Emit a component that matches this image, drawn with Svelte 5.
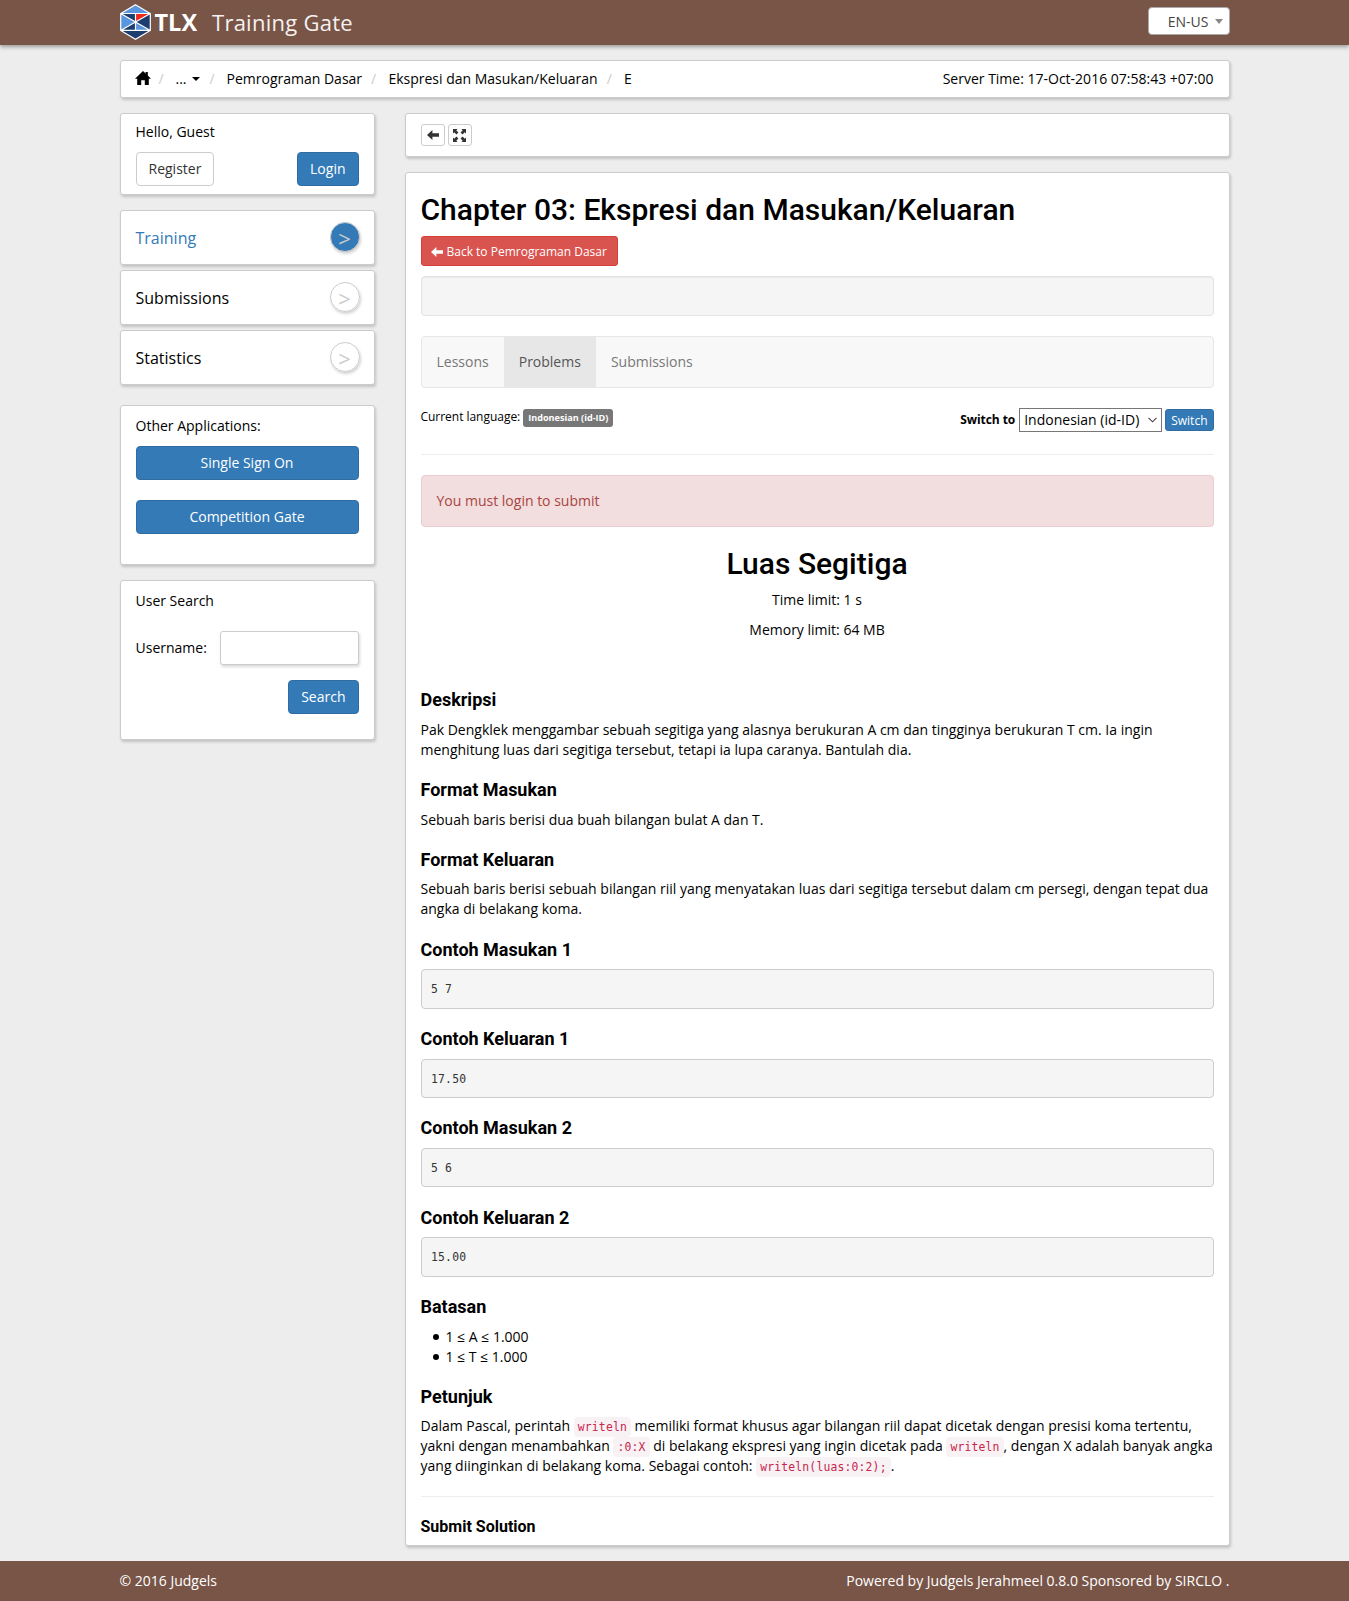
<script>
  const menu = [
    { label: 'Training', active: true },
    { label: 'Submissions', active: false },
    { label: 'Statistics', active: false },
  ];
  const samples = [
    { title: 'Contoh Masukan 1', body: '5 7' },
    { title: 'Contoh Keluaran 1', body: '17.50' },
    { title: 'Contoh Masukan 2', body: '5 6' },
    { title: 'Contoh Keluaran 2', body: '15.00' },
  ];
</script>

{#snippet leftArrow()}
  <svg class="arrow" viewBox="0 0 12 10" width="12" height="10"><path d="M0 5 5.4 0V3.3H12V6.7H5.4V10Z" fill="currentColor" /></svg>
{/snippet}

<header>
  <div class="container bar">
    <div class="brand">
      <svg class="logo" viewBox="0 0 31 36" width="31" height="36">
        <path d="M15.5 .8 30.3 9.5V26.4L15.5 35.2.7 26.4V9.5Z" fill="#5a96df" />
        <path d="M.7 9.5H15.5V18Z" fill="#1c3d6e" />
        <path d="M15.5 9.5H30.3L15.5 18Z" fill="#ee2a1c" />
        <path d="M30.3 9.5V26.4L15.5 18Z" fill="#1c3d6e" />
        <path d="M.7 26.4H30.3L15.5 35.2Z" fill="#1c3d6e" />
        <path d="M15.5 18 .7 26.4H15.5Z" fill="#1c3d6e" />
        <path d="M15.5 .8 30.3 9.5V26.4L15.5 35.2.7 26.4V9.5ZM.7 9.5H30.3M.7 26.4H30.3M.7 9.5 30.3 26.4M30.3 9.5.7 26.4M15.5 9.5V26.4" fill="none" stroke="#fff" stroke-width="1.2" />
      </svg>
      <span class="tlx">TLX</span>
      <span class="app">Training Gate</span>
    </div>
    <div class="lang">EN-US<i></i></div>
  </div>
</header>

<div class="container body">
  <nav class="card crumbs">
    <svg class="home" viewBox="0 0 16 14" width="16" height="14"><path d="M8 0 10.6 2.5V1H12.8V4.6L16 7.8H13.8V14H9.8V9.2H6.2V14H2.2V7.8H0Z" fill="#000" /></svg>
    <span class="slash s1">/</span>
    <span class="dots">...<i></i></span>
    <span class="slash s2">/</span>
    <span>Pemrograman Dasar</span>
    <span class="slash s3">/</span>
    <span>Ekspresi dan Masukan/Keluaran</span>
    <span class="slash s3">/</span>
    <span>E</span>
    <span class="time">Server Time: 17-Oct-2016 07:58:43 +07:00</span>
  </nav>

  <div class="columns">
    <aside>
      <section class="card hello">
        <div>Hello, Guest</div>
        <div class="pair">
          <button class="btn plain">Register</button>
          <button class="btn blue">Login</button>
        </div>
      </section>
      <div class="menu">
        {#each menu as item}
          <a class="card item" class:active={item.active}>
            <span>{item.label}</span><b>&gt;</b>
          </a>
        {/each}
      </div>
      <section class="card apps">
        <div>Other Applications:</div>
        <button class="btn blue">Single Sign On</button>
        <button class="btn blue">Competition Gate</button>
      </section>
      <section class="card search">
        <div>User Search</div>
        <div class="field"><span>Username:</span><input type="text" /></div>
        <button class="btn blue">Search</button>
      </section>
    </aside>

    <main>
      <section class="card tools">
        <button class="tool">{@render leftArrow()}</button>
        <button class="tool">
          <svg viewBox="0 0 13 13" width="13" height="13"><g fill="currentColor"><path d="M0 0H4.6L3.3 1.3 5.4 3.4 3.4 5.4 1.3 3.3 0 4.6Z" /><path d="M13 0V4.6L11.7 3.3 9.6 5.4 7.6 3.4 9.7 1.3 8.4 0Z" /><path d="M0 13V8.4L1.3 9.7 3.4 7.6 5.4 9.6 3.3 11.7 4.6 13Z" /><path d="M13 13H8.4L9.7 11.7 7.6 9.6 9.6 7.6 11.7 9.7 13 8.4Z" /></g></svg>
        </button>
      </section>

      <section class="card content">
        <h2>Chapter 03: Ekspresi dan Masukan/Keluaran</h2>
        <button class="back">{@render leftArrow()}<span>Back to Pemrograman Dasar</span></button>
        <div class="well"></div>
        <div class="tabs"><span>Lessons</span><span class="on">Problems</span><span>Submissions</span></div>
        <div class="langrow">
          <div class="current"><span>Current language:</span><b>Indonesian (id-ID)</b></div>
          <div class="switch">
            <b>Switch to</b>
            <div class="select">Indonesian (id-ID)<svg viewBox="0 0 9 6" width="9" height="6"><path d="M.5 .8 4.5 4.8 8.5 .8" fill="none" stroke="#444" stroke-width="1.1" /></svg></div>
            <button>Switch</button>
          </div>
        </div>
        <hr />
        <div class="alert">You must login to submit</div>

        <div class="problem">
          <h2>Luas Segitiga</h2>
          <p>Time limit: 1 s</p>
          <p>Memory limit: 64 MB</p>
        </div>

        <h3>Deskripsi</h3>
        <p>Pak Dengklek menggambar sebuah segitiga yang alasnya berukuran A cm dan tingginya berukuran T cm. Ia ingin<br />menghitung luas dari segitiga tersebut, tetapi ia lupa caranya. Bantulah dia.</p>
        <h3>Format Masukan</h3>
        <p>Sebuah baris berisi dua buah bilangan bulat A dan T.</p>
        <h3>Format Keluaran</h3>
        <p>Sebuah baris berisi sebuah bilangan riil yang menyatakan luas dari segitiga tersebut dalam cm persegi, dengan tepat dua<br />angka di belakang koma.</p>
        {#each samples as s}
          <h3 class="sample">{s.title}</h3>
          <pre>{s.body}</pre>
        {/each}
        <h3>Batasan</h3>
        <ul>
          <li>1 ≤ A ≤ 1.000</li>
          <li>1 ≤ T ≤ 1.000</li>
        </ul>
        <h3>Petunjuk</h3>
        <p>Dalam Pascal, perintah <code>writeln</code> memiliki format khusus agar bilangan riil dapat dicetak dengan presisi koma tertentu,<br />yakni dengan menambahkan <code>:0:X</code> di belakang ekspresi yang ingin dicetak pada <code>writeln</code>, dengan X adalah banyak angka<br />yang diinginkan di belakang koma. Sebagai contoh: <code>writeln(luas:0:2);</code>.</p>
        <hr class="end" />
        <h4>Submit Solution</h4>
      </section>
    </main>
  </div>
</div>

<footer>
  <div class="container bar"><span>© 2016 Judgels</span><span>Powered by Judgels Jerahmeel 0.8.0 Sponsored by SIRCLO .</span></div>
</footer>

<style>
  :global(body) {
    background: #ededed;
    color: #000;
    font: 14px/20px "Open Sans", sans-serif;
  }
  :global(#app) * { box-sizing: border-box; }
  .container { width: 1110px; margin: 0 auto; }
  .bar { display: flex; justify-content: space-between; }
  button { font: inherit; margin: 0; }

  header { height: 45px; background: #795548; box-shadow: 0 2px 4px rgba(0, 0, 0, 0.35); }
  .brand { display: flex; align-items: center; height: 45px; padding-bottom: 1px; color: #fff; }
  .logo { display: block; }
  .tlx { font-size: 23.5px; font-weight: 700; margin-left: 4px; width: 46px; }
  .app { font-size: 22px; letter-spacing: 0.26px; margin-left: 11.5px; color: #f5f1ef; }
  .lang {
    display: flex; align-items: center; justify-content: flex-end; gap: 6px;
    width: 82px; height: 28px; margin-top: 7px; padding: 1px 6px 0 0;
    background: #fff; border: 1px solid #aaa; border-radius: 4px; color: #444;
  }
  .lang i { border: 4px solid transparent; border-top: 5px solid #888; border-bottom: 0; margin-top: -1px; }

  .card {
    display: block; background: #fff; border: 1px solid #ccc; border-radius: 3px;
    box-shadow: 1px 2px 3px rgba(0, 0, 0, 0.18);
  }
  .body { padding-top: 15px; }
  .crumbs { display: flex; align-items: center; height: 38px; padding: 0 15px 0 14px; margin-bottom: 15px; white-space: nowrap; }
  .home { margin-right: 8px; margin-top: -3px; }
  .slash { color: #ccc; }
  .s1 { width: 17px; }
  .dots { display: flex; align-items: center; width: 34px; gap: 5px; }
  .dots i { border: 4px solid transparent; border-top-color: #000; border-bottom: 0; }
  .s2 { width: 17px; }
  .s3 { width: 17.3px; margin-left: 9px; }
  .time { margin-left: auto; }

  .columns { display: flex; justify-content: space-between; }
  aside { width: 255px; }
  main { width: 825px; }

  .btn { height: 34px; padding: 0 12px; border-radius: 4px; border: 1px solid; white-space: nowrap; }
  .plain { background: #fff; border-color: #ccc; color: #333; }
  .blue { background: #337ab7; border-color: #2e6da4; color: #fff; }

  .hello { height: 82px; padding: 8px 15px; margin-bottom: 15px; }
  .pair { display: flex; justify-content: space-between; margin-top: 10px; }
  .menu { display: grid; gap: 5px; margin-bottom: 20px; }
  .item { display: flex; justify-content: space-between; align-items: center; height: 55px; padding: 0 14px 0 15px; font-size: 16px; }
  .item b {
    width: 30px; height: 30px; border: 1px solid #ccc; border-radius: 50%; margin-top: -1px;
    box-shadow: 1px 2px 3px rgba(0, 0, 0, 0.18);
    text-align: center; font-weight: 400; font-size: 22px; line-height: 30px; color: #ccc;
  }
  .active { color: #337ab7; }
  .active b { background: #337ab7; line-height: 31px; }
  .apps { display: flex; flex-direction: column; height: 160px; padding: 10px 15px; margin-bottom: 15px; }
  .apps .btn { margin-top: 10px; }
  .apps .btn + .btn { margin-top: 20px; }
  .search { display: flex; flex-direction: column; height: 160px; padding: 10px 15px; }
  .field { display: flex; justify-content: space-between; align-items: center; margin: 20px 0 15px; }
  .field input {
    width: 139px; height: 34px; border: 1px solid #ccc; border-radius: 3px; background: #fff;
    box-shadow: 1px 2px 3px rgba(0, 0, 0, 0.15);
  }
  .search .btn { align-self: flex-end; }

  .tools { display: flex; gap: 3px; height: 44px; padding: 10px 15px; margin-bottom: 15px; }
  .tool {
    display: flex; align-items: center; justify-content: center; width: 24px; height: 22px;
    padding: 0; background: #fff; border: 1px solid #ccc; border-radius: 3px; color: #333;
  }

  .content { height: 1374px; padding: 0 15px; margin-bottom: 15px; overflow: hidden; }
  h2, h3, h4 { font-family: Roboto, sans-serif; line-height: 1.1; margin: 20px 0 10px; }
  h2 { font-size: 30px; font-weight: 500; }
  h3 { font-size: 18px; font-weight: 700; }
  .sample { margin: 20.4px 0 9.6px; }
  h4 { font-size: 16px; font-weight: 700; margin: 0; }
  p { margin: 0 0 10px; white-space: nowrap; }
  .back {
    display: flex; align-items: center; gap: 4px; height: 30px; padding: 1px 10px 0 9px;
    background: #d9534f; border: 1px solid #d43f3a; border-radius: 3px; color: #fff; font-size: 12px;
  }
  .back span { padding-top: 1px; }
  .well {
    height: 40px; margin: 10px 0 20px; background: #f5f5f5; border: 1px solid #e3e3e3; border-radius: 4px;
    box-shadow: inset 0 1px 1px rgba(0, 0, 0, 0.05);
  }
  .tabs { display: flex; height: 52px; background: #f8f8f8; border: 1px solid #e7e7e7; border-radius: 4px; color: #777; }
  .tabs span { padding: 15px; }
  .tabs .on { background: #e7e7e7; color: #555; }
  .langrow { display: flex; justify-content: space-between; height: 66px; padding-top: 20px; font-size: 12px; }
  .current { display: flex; gap: 3px; height: 18px; align-items: center; margin-top: 1px; }
  .current span { margin-top: -2px; letter-spacing: -0.03px; }
  .current b { height: 18px; padding: 0 5px; border-radius: 3px; background: #777; color: #fff; font-size: 9.1px; line-height: 18px; }
  .switch { display: flex; gap: 3px; align-items: center; height: 24px; }
  .switch b { margin-right: 1px; letter-spacing: -0.06px; }
  .select {
    display: flex; align-items: center; justify-content: space-between; width: 143px; height: 24px;
    padding: 0 4px 1px; border: 1px solid #777; background: #fff; font-size: 14px; white-space: nowrap;
  }
  .switch button { height: 22px; padding: 1px 5px 0; background: #337ab7; border: 1px solid #2e6da4; border-radius: 3px; color: #fff; line-height: 18px; }
  hr { height: 1px; margin: 0 0 20px; border: 0; background: #eee; }
  .alert { height: 52px; padding: 15px; background: #f2dede; border: 1px solid #ebccd1; border-radius: 4px; color: #a94442; }
  .problem { text-align: center; margin-bottom: 50px; }
  pre {
    margin: 0; padding: 10px 9.5px 9px; height: 39.57px; background: #f5f5f5; border: 1px solid #ccc; border-radius: 4px;
    color: #333; font: 11.4px/18.57px "DejaVu Sans Mono", monospace; letter-spacing: 0.2px;
  }
  ul { margin: 0 0 10px; padding: 0; list-style: none; }
  li { display: flex; align-items: center; gap: 7px; padding-left: 12px; }
  li::before { content: ""; width: 6px; height: 6px; border-radius: 50%; background: #000; }
  code {
    padding: 3px 4px; background: #f9f2f4; border-radius: 4px; color: #c7254e;
    font: 11.4px/1 "DejaVu Sans Mono", monospace; letter-spacing: 0.17px;
  }
  .end { margin-top: 20px; }
  .end + h4 { padding-top: 1px; }

  footer { height: 40px; background: #795548; color: #fff; line-height: 40px; }
</style>
